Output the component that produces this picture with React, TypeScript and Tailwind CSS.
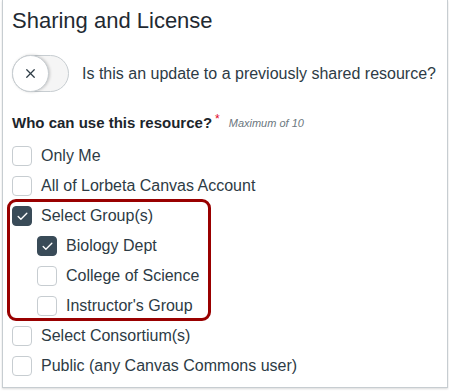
import { Check, X } from 'lucide-react';

type Option = {
  label: string;
  checked?: boolean;
  indent?: boolean;
};

const topOptions: Option[] = [
  { label: 'Only Me' },
  { label: 'All of Lorbeta Canvas Account' },
];

const groupOptions: Option[] = [
  { label: 'Select Group(s)', checked: true },
  { label: 'Biology Dept', checked: true, indent: true },
  { label: 'College of Science', indent: true },
  { label: "Instructor's Group", indent: true },
];

const bottomOptions: Option[] = [
  { label: 'Select Consortium(s)' },
  { label: 'Public (any Canvas Commons user)' },
];

const CheckRow = ({ option }: { option: Option }) => (
  <label
    className={`flex h-[30px] items-center gap-[9px] ${
      option.indent ? 'pl-[25px]' : ''
    }`}
  >
    <span
      className={`flex h-[20px] w-[20px] flex-shrink-0 items-center justify-center rounded-[4px] border ${
        option.checked
          ? 'border-[#394b58] bg-[#394b58]'
          : 'border-[#c7cdd1] bg-white'
      }`}
    >
      {option.checked && (
        <Check size={13} strokeWidth={2.5} className="text-white" />
      )}
    </span>
    <span className="text-[16px] leading-none text-[#2d3b45]">
      {option.label}
    </span>
  </label>
);

const App = () => {
  return (
    <div className="h-[392px] w-[449px] bg-white font-['Liberation_Sans',Arial,sans-serif]">
      <div className="ml-[2px] h-[388px] w-[446px] border-x border-b border-[#c7cdd1] bg-white pl-[9px] pt-[7px] shadow-[0_1px_2px_rgba(0,0,0,0.15)]">
        <h2 className="text-[22px] leading-[28px] text-[#1f2a32]">
          Sharing and License
        </h2>

        <div className="mt-[20px] flex items-center gap-[13px]">
          <div className="flex h-[37px] w-[57px] items-center rounded-full border border-[#c7cdd1] bg-[#f5f5f5]">
            <div className="-ml-px flex h-[37px] w-[37px] items-center justify-center rounded-full border border-[#c7cdd1] bg-white shadow-[1px_0_3px_rgba(0,0,0,0.2)]">
              <X size={15} strokeWidth={2} className="text-[#2d3b45]" />
            </div>
          </div>
          <span className="text-[16px] text-[#2d3b45]">
            Is this an update to a previously shared resource?
          </span>
        </div>

        <div className="mt-[21px] flex h-[20px] items-center">
          <span className="text-[15px] font-bold text-[#1c252c]">
            Who can use this resource?
          </span>
          <span className="-mt-[8px] ml-[3px] text-[12px] text-[#e0061f]">
            *
          </span>
          <span className="ml-[9px] text-[11px] italic text-[#6b7780]">
            Maximum of 10
          </span>
        </div>

        <div className="mt-[8px] flex flex-col">
          {topOptions.map((option) => (
            <CheckRow key={option.label} option={option} />
          ))}
          <div className="relative flex flex-col">
            <div className="pointer-events-none absolute -left-[5px] -top-[2px] bottom-0 w-[204px] rounded-[9px] border-[3px] border-[#990000]" />
            {groupOptions.map((option) => (
              <CheckRow key={option.label} option={option} />
            ))}
          </div>
          {bottomOptions.map((option) => (
            <CheckRow key={option.label} option={option} />
          ))}
        </div>
      </div>
    </div>
  );
};

export default App;
